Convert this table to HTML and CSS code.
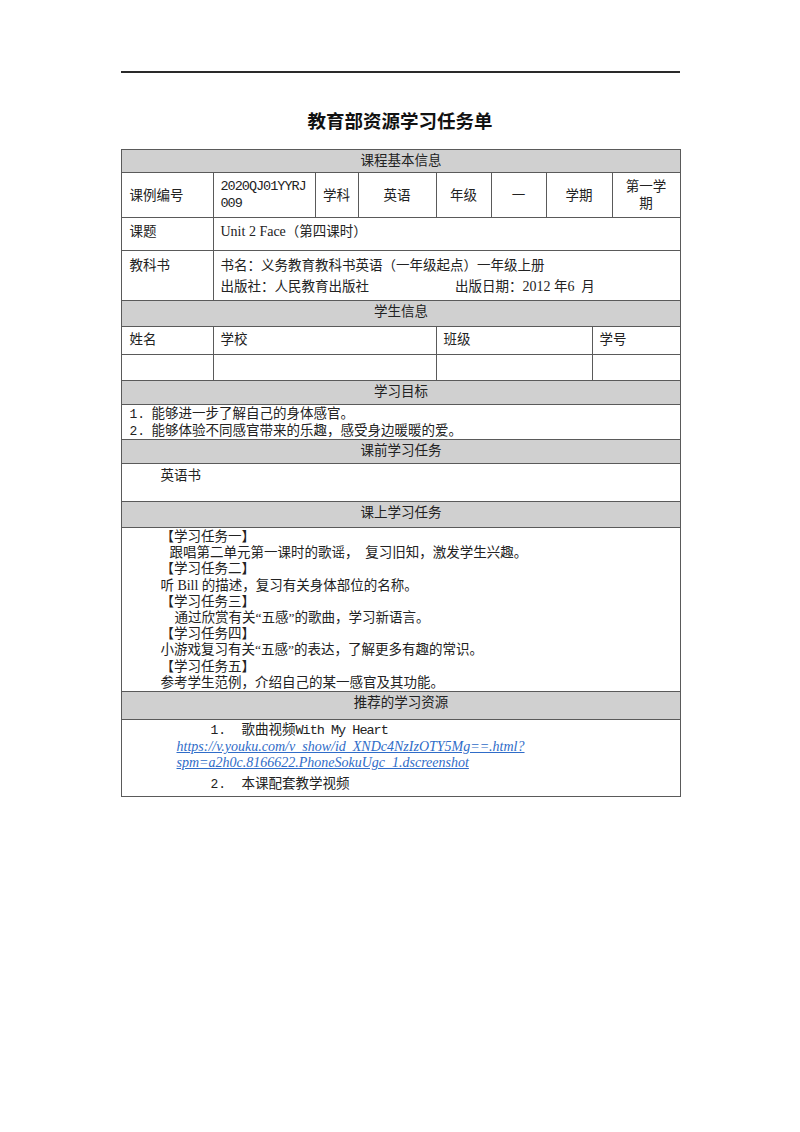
FILE: index.html
```html
<!DOCTYPE html>
<html lang="zh-CN">
<head>
<meta charset="utf-8">
<title>教育部资源学习任务单</title>
<link rel="stylesheet" href="styles.css">
</head>
<body>
<div class="page">
  <hr class="rule">
  <h1 class="title">教育部资源学习任务单</h1>
  <table class="sheet">
    <colgroup>
      <col class="c1"><col class="c2"><col class="c3"><col class="c4"><col class="c5"><col class="c6"><col class="c7"><col class="c8"><col class="c9">
    </colgroup>
    <tr class="head h23"><td colspan="9">课程基本信息</td></tr>
    <tr class="r-info">
      <td>课例编号</td>
      <td class="code">2020QJ01YYRJ<br>009</td>
      <td class="ctr">学科</td>
      <td class="ctr">英语</td>
      <td class="ctr">年级</td>
      <td class="ctr">一</td>
      <td class="ctr" colspan="2">学期</td>
      <td class="ctr">第一学<br>期</td>
    </tr>
    <tr class="r-topic">
      <td>课题</td>
      <td colspan="8"><span class="latn">Unit 2 Face</span>（第四课时）</td>
    </tr>
    <tr class="r-book">
      <td>教科书</td>
      <td colspan="8">书名：义务教育教科书英语（一年级起点）一年级上册<br>出版社：人民教育出版社<span class="gap"></span>出版日期：<span class="latn">2012</span> 年<span class="latn">6</span>&nbsp; 月</td>
    </tr>
    <tr class="head h26"><td colspan="9">学生信息</td></tr>
    <tr class="r-student">
      <td>姓名</td>
      <td colspan="3">学校</td>
      <td colspan="3">班级</td>
      <td colspan="2">学号</td>
    </tr>
    <tr class="r-empty">
      <td></td>
      <td colspan="3"></td>
      <td colspan="3"></td>
      <td colspan="2"></td>
    </tr>
    <tr class="head h24"><td colspan="9">学习目标</td></tr>
    <tr class="r-goals">
      <td colspan="9">
        <div class="goal"><span class="num">1.</span>能够进一步了解自己的身体感官。</div>
        <div class="goal"><span class="num">2.</span>能够体验不同感官带来的乐趣，感受身边暖暖的爱。</div>
      </td>
    </tr>
    <tr class="head h24"><td colspan="9">课前学习任务</td></tr>
    <tr class="r-pre">
      <td colspan="9"><div class="in32">英语书</div></td>
    </tr>
    <tr class="head h26"><td colspan="9">课上学习任务</td></tr>
    <tr class="r-tasks">
      <td colspan="9">
        <div class="in32">【学习任务一】</div>
        <div class="in41">跟唱第二单元第一课时的歌谣，&nbsp;&nbsp;复习旧知，激发学生兴趣。</div>
        <div class="in32">【学习任务二】</div>
        <div class="in32">听 <span class="latn">Bill</span> 的描述，复习有关身体部位的名称。</div>
        <div class="in32">【学习任务三】</div>
        <div class="in47">通过欣赏有关“五感”的歌曲，学习新语言。</div>
        <div class="in32">【学习任务四】</div>
        <div class="in32">小游戏复习有关“五感”的表达，了解更多有趣的常识。</div>
        <div class="in32">【学习任务五】</div>
        <div class="in32">参考学生范例，介绍自己的某一感官及其功能。</div>
      </td>
    </tr>
    <tr class="head h28"><td colspan="9">推荐的学习资源</td></tr>
    <tr class="r-res">
      <td colspan="9">
        <div class="res"><span class="rnum">1.</span>歌曲视频<span class="latin">With My Heart</span></div>
        <div class="link-wrap"><a class="link" href="#">https://v.youku.com/v_show/id_XNDc4NzIzOTY5Mg==.html?<br>spm=a2h0c.8166622.PhoneSokuUgc_1.dscreenshot</a></div>
        <div class="res res2"><span class="rnum">2.</span>本课配套教学视频</div>
      </td>
    </tr>
  </table>
</div>
</body>
</html>
```

FILE: styles.css
```css
html, body {
  margin: 0;
  padding: 0;
  background: #ffffff;
}

body {
  font-family: "Liberation Serif", "Noto Sans CJK SC", serif;
  color: #1a1a1a;
}

.page {
  width: 559px;
  margin: 0 auto;
  padding-top: 71px;
}

.rule {
  border: 0;
  border-top: 2px solid #2a2a2a;
  margin: 0;
  height: 0;
}

.title {
  font-family: "Noto Sans CJK SC", sans-serif;
  font-weight: 700;
  font-size: 18.5px;
  line-height: 26px;
  text-align: center;
  margin: 34px 0 16px;
  color: #111;
}

.sheet {
  width: 559px;
  border-collapse: collapse;
  table-layout: fixed;
  font-size: 13.5px;
  line-height: 17px;
}

.c1 { width: 92px; }
.c2 { width: 102px; }
.c3 { width: 43px; }
.c4 { width: 78px; }
.c5 { width: 55px; }
.c6 { width: 55px; }
.c7 { width: 46px; }
.c8 { width: 20px; }
.c9 { width: 68px; }

.sheet td {
  border: 1px solid #5a5a5a;
  padding: 0 7px;
  vertical-align: top;
  font-family: "Liberation Serif", "Noto Sans CJK SC", serif;
  color: #222;
}

.sheet tr > td:first-child {
  padding-left: 8px;
}

.sheet .head td {
  background: #d0d0d0;
  text-align: center;
  padding-top: 2px;
}

.h23 { height: 23px; }
.h24 { height: 24px; }
.h26 { height: 26px; }
.h28 { height: 28px; }

.sheet td.code {
  font-family: "Liberation Mono", monospace;
  font-size: 13.5px;
  letter-spacing: -1px;
  line-height: 17px;
}

.latn {
  font-size: 14px;
  line-height: 1;
}

.ctr {
  text-align: center;
}

.r-info { height: 45px; }
.sheet .r-info td {
  vertical-align: middle;
}

.r-topic { height: 33px; }
.sheet .r-topic td { padding-top: 5px; }

.r-book { height: 50px; }
.sheet .r-book td { padding-top: 4px; line-height: 21px; }

.gap {
  display: inline-block;
  width: 86px;
}

.r-student { height: 28px; }
.sheet .r-student td { padding-top: 4px; }

.r-empty { height: 26px; }

.r-goals { height: 34px; }
.sheet .r-goals td { padding: 1px 6px 0; }

.goal {
  line-height: 16.5px;
}

.num {
  display: inline-block;
  width: 22px;
  font-family: "Liberation Mono", monospace;
  font-size: 13px;
  line-height: 1;
}

.r-pre { height: 38px; }
.sheet .r-pre td { padding-top: 3px; }

.r-tasks { height: 164px; }
.sheet .r-tasks td { padding-top: 1px; line-height: 16.2px; }

.in32 { padding-left: 31px; }
.in41 { padding-left: 40px; }
.in47 { padding-left: 45px; }

.r-res { height: 77px; }
.sheet .r-res td { padding-top: 1px; }

.res {
  line-height: 18px;
  padding-left: 81px;
}

.res2 {
  margin-top: 4px;
}

.rnum {
  display: inline-block;
  width: 31px;
  font-family: "Liberation Mono", monospace;
  font-size: 13px;
  line-height: 1;
}

.latin {
  font-family: "Liberation Mono", monospace;
  font-size: 13.5px;
  letter-spacing: -1px;
  line-height: 1;
}

.link-wrap {
  padding-left: 47px;
  line-height: 16px;
}

.link {
  font-style: italic;
  color: #2f6cc8;
  text-decoration: underline;
  font-family: "Liberation Serif", serif;
  font-size: 14px;
  line-height: 16px;
}
```
